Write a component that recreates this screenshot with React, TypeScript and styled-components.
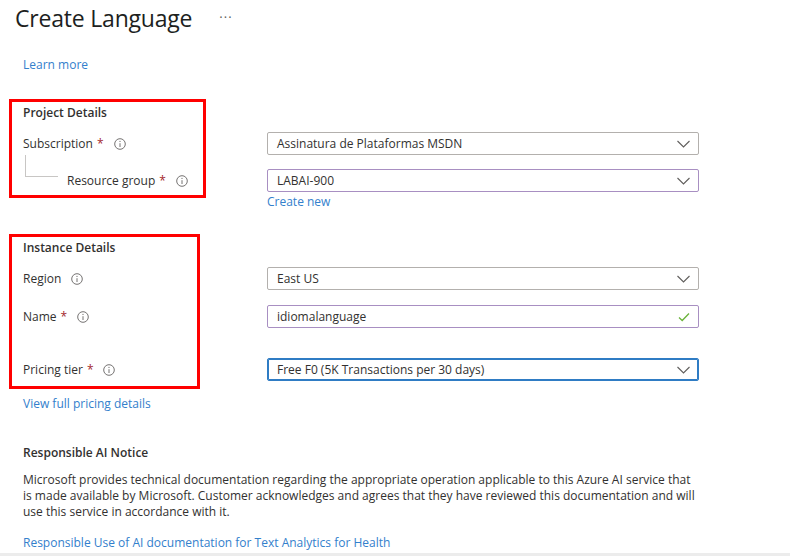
import React from "react";
import styled, { createGlobalStyle } from "styled-components";

const Global = createGlobalStyle`
  html, body { margin: 0; padding: 0; background: #ffffff; }
  body { font-family: "Open Sans", "Liberation Sans", sans-serif; color: #323130; }
  * { box-sizing: border-box; }
`;

const Page = styled.div`
  width: 790px;
  height: 556px;
  overflow: hidden;
  position: relative;
  display: flex;
  flex-direction: column;
`;

const Header = styled.div`
  display: flex;
  align-items: center;
  height: 36px;
  padding-left: 15px;
  gap: 27px;
`;

const Title = styled.h1`
  margin: 0;
  font-size: 23px;
  font-weight: 500;
  line-height: 36px;
  color: #201f1e;
  letter-spacing: -0.2px;
`;

const More = styled.span`
  font-size: 13px;
  color: #605e5c;
  letter-spacing: 1px;
  line-height: 36px;
  margin-top: -2px;
`;

const Body = styled.div`
  padding-left: 23px;
  display: flex;
  flex-direction: column;
`;

const Link = styled.a<{ $mt?: number }>`
  display: block;
  color: #3380cc;
  font-size: 12px;
  line-height: 20px;
  height: 20px;
  text-decoration: none;
  margin-top: ${(p) => p.$mt ?? 0}px;
`;

const Section = styled.section<{ $mt: number }>`
  position: relative;
  margin-top: ${(p) => p.$mt}px;
  display: flex;
  flex-direction: column;
`;

const Highlight = styled.div<{ $top: number; $h: number; $w: number }>`
  position: absolute;
  left: -14px;
  top: ${(p) => p.$top}px;
  width: ${(p) => p.$w}px;
  height: ${(p) => p.$h}px;
  border: 3px solid #ff0000;
  pointer-events: none;
`;

const Heading = styled.h2`
  margin: 0;
  font-size: 12px;
  font-weight: 600;
  line-height: 20px;
  height: 20px;
  color: #323130;
`;

const Row = styled.div<{ $mt: number }>`
  display: grid;
  grid-template-columns: 244px 432px;
  align-items: center;
  margin-top: ${(p) => p.$mt}px;
  height: 23px;
`;

const Label = styled.div<{ $indent?: number }>`
  display: flex;
  align-items: center;
  font-size: 12px;
  color: #323130;
  padding-left: ${(p) => p.$indent ?? 0}px;
  position: relative;
  height: 23px;
`;

const Star = styled.span`
  color: #a4262c;
  margin-left: 4px;
  font-size: 12px;
`;

const Info = styled.svg`
  margin-left: 10px;
  width: 12px;
  height: 12px;
  flex: none;
`;

const TreeLine = styled.div`
  position: absolute;
  left: 2px;
  top: -14px;
  width: 33px;
  height: 22px;
  border-left: 1px solid #c8c6c4;
  border-bottom: 1px solid #c8c6c4;
`;

const Field = styled.div<{ $tone: "grey" | "purple" | "blue" }>`
  height: 23px;
  display: flex;
  align-items: center;
  justify-content: space-between;
  padding: 0 8px 0 9px;
  font-size: 12px;
  color: #323130;
  background: #fff;
  border-radius: 2px;
  border: 1px solid
    ${(p) => (p.$tone === "grey" ? "#b3b0ad" : p.$tone === "purple" ? "#a88fc2" : "#2f7cc4")};
  box-shadow: ${(p) => (p.$tone === "blue" ? "inset 0 0 0 1px #2f7cc4" : "none")};
`;

const SubLink = styled.div`
  display: grid;
  grid-template-columns: 244px 432px;
  height: 18px;
`;

const Paragraph = styled.p`
  margin: 9px 0 0 0;
  font-size: 12px;
  line-height: 16px;
  color: #323130;
`;

const BottomStrip = styled.div`
  position: absolute;
  left: 0;
  right: 0;
  bottom: 0;
  height: 3px;
  background: #ececec;
`;

const InfoIcon = () => (
  <Info viewBox="0 0 12 12">
    <circle cx="6" cy="6" r="5.3" fill="none" stroke="#757372" strokeWidth="1" />
    <line x1="6" y1="5.2" x2="6" y2="9" stroke="#757372" strokeWidth="1" />
    <circle cx="6" cy="3.4" r="0.6" fill="#757372" />
  </Info>
);

const Chevron = () => (
  <svg width="13" height="8" viewBox="0 0 13 8">
    <polyline points="0.5,1 6.5,7 12.5,1" fill="none" stroke="#605e5c" strokeWidth="1.1" />
  </svg>
);

const Check = () => (
  <svg width="12" height="10" viewBox="0 0 12 10">
    <polyline points="1,5.5 4.2,8.5 11,1.5" fill="none" stroke="#6bb33b" strokeWidth="1.3" />
  </svg>
);

export default function App() {
  return (
    <Page>
      <Global />
      <Header>
        <Title>Create Language</Title>
        <More>···</More>
      </Header>
      <Body>
        <Link $mt={19}>Learn more</Link>

        <Section $mt={28}>
          <Highlight $top={-4} $w={197} $h={99} />
          <Heading>Project Details</Heading>
          <Row $mt={9}>
            <Label>
              Subscription<Star>*</Star>
              <InfoIcon />
            </Label>
            <Field $tone="grey">
              Assinatura de Plataformas MSDN
              <Chevron />
            </Field>
          </Row>
          <Row $mt={14}>
            <Label $indent={44}>
              <TreeLine />
              Resource group<Star>*</Star>
              <InfoIcon />
            </Label>
            <Field $tone="purple">
              LABAI-900
              <Chevron />
            </Field>
          </Row>
          <SubLink>
            <span />
            <Link>Create new</Link>
          </SubLink>
        </Section>

        <Section $mt={28}>
          <Highlight $top={-4} $w={191} $h={155} />
          <Heading>Instance Details</Heading>
          <Row $mt={9}>
            <Label>
              Region
              <InfoIcon />
            </Label>
            <Field $tone="grey">
              East US
              <Chevron />
            </Field>
          </Row>
          <Row $mt={15}>
            <Label>
              Name<Star>*</Star>
              <InfoIcon />
            </Label>
            <Field $tone="purple">
              idiomalanguage
              <Check />
            </Field>
          </Row>
          <Row $mt={30}>
            <Label>
              Pricing tier<Star>*</Star>
              <InfoIcon />
            </Label>
            <Field $tone="blue">
              Free F0 (5K Transactions per 30 days)
              <Chevron />
            </Field>
          </Row>
        </Section>

        <Link $mt={13}>View full pricing details</Link>

        <Section $mt={29}>
          <Heading>Responsible AI Notice</Heading>
          <Paragraph>
            Microsoft provides technical documentation regarding the appropriate operation applicable to this Azure AI service that
            <br />
            is made available by Microsoft. Customer acknowledges and agrees that they have reviewed this documentation and will
            <br />
            use this service in accordance with it.
          </Paragraph>
          <Link $mt={13}>Responsible Use of AI documentation for Text Analytics for Health</Link>
        </Section>
      </Body>
      <BottomStrip />
    </Page>
  );
}
